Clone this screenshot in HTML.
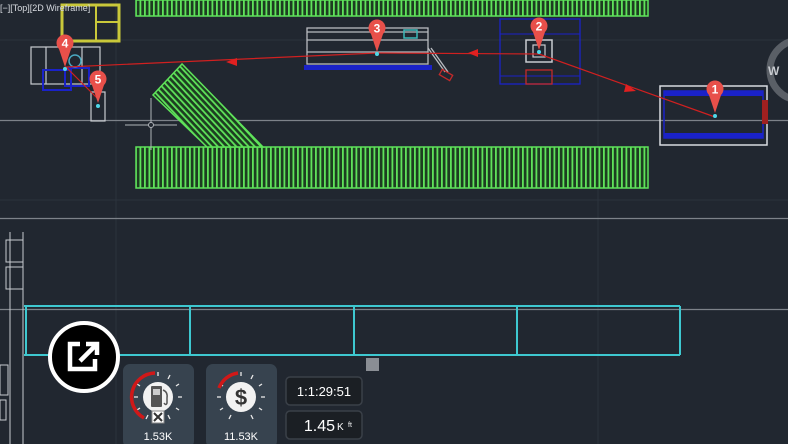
<!DOCTYPE html>
<html><head><meta charset="utf-8"><style>
html,body{margin:0;padding:0;background:#212730;width:788px;height:444px;overflow:hidden;font-family:"Liberation Sans",sans-serif}
.abs{position:absolute}
</style></head><body>
<svg class="abs" style="left:0;top:0" width="788" height="444" viewBox="0 0 788 444">
<defs>
<pattern id="gs" width="4.5" height="10" patternUnits="userSpaceOnUse"><rect width="4.5" height="10" fill="#1d3d21"/><rect width="1.8" height="10" fill="#5fe35a"/></pattern>
<pattern id="gd" width="4.5" height="10" patternUnits="userSpaceOnUse" patternTransform="rotate(-43)"><rect width="4.5" height="10" fill="#1d3d21"/><rect width="1.8" height="10" fill="#5fe35a"/></pattern>
</defs>
<rect width="788" height="444" fill="#212730"/>
<g stroke="#2c333d" stroke-width="1">
<line x1="116" y1="0" x2="116" y2="444"/><line x1="598" y1="0" x2="598" y2="444"/>
<line x1="0" y1="40" x2="788" y2="40"/><line x1="0" y1="200" x2="788" y2="200"/>
</g>
<g stroke="#7d8289" stroke-width="1.3">
<line x1="0" y1="120.5" x2="788" y2="120.5"/>
<line x1="0" y1="218.5" x2="788" y2="218.5"/>
<line x1="0" y1="309.5" x2="788" y2="309.5"/>
</g>
<rect x="136" y="0" width="512" height="16" fill="url(#gs)" stroke="#5fe35a" stroke-width="1.5"/>
<rect x="136" y="147" width="512" height="41" fill="url(#gs)" stroke="#5fe35a" stroke-width="1.5"/>
<polygon points="182,64 153,95 207,147 263,147" fill="url(#gd)" stroke="#5fe35a" stroke-width="1.5"/>
<rect x="62" y="5" width="57" height="36" fill="none" stroke="#c9c83a" stroke-width="3"/>
<line x1="96" y1="5" x2="96" y2="41" stroke="#c9c83a" stroke-width="2"/>
<line x1="96" y1="22" x2="119" y2="22" stroke="#c9c83a" stroke-width="2"/>
<text x="0" y="11" fill="#d8dbe0" font-size="9">[−][Top][2D Wireframe]</text>
<g fill="none" stroke="#c8cbd0" stroke-width="1.2">
<rect x="31" y="47" width="69" height="37"/><line x1="46" y1="47" x2="46" y2="84"/><line x1="82" y1="47" x2="82" y2="84"/>
<rect x="91" y="92" width="14" height="29"/>
</g>
<rect x="43" y="70" width="28" height="20" fill="none" stroke="#1a22c8" stroke-width="2"/>
<rect x="65" y="68" width="24" height="18" fill="none" stroke="#1a22c8" stroke-width="2"/>
<circle cx="75" cy="61" r="6" fill="none" stroke="#4aa8c0" stroke-width="1.5"/>
<g stroke="#b0b4b9" stroke-width="1"><line x1="125" y1="125" x2="177" y2="125"/><line x1="151" y1="98" x2="151" y2="150"/></g>
<circle cx="151" cy="125" r="2.5" fill="#212730" stroke="#b0b4b9"/>
<g fill="none" stroke="#b8bbc0" stroke-width="1.3">
<rect x="307" y="28" width="121" height="36"/><line x1="307" y1="32" x2="428" y2="32"/><line x1="307" y1="40" x2="428" y2="40"/><line x1="307" y1="52" x2="428" y2="52"/>
<line x1="428" y1="48" x2="445" y2="72"/><line x1="431" y1="48" x2="448" y2="72"/>
</g>
<rect x="404" y="30" width="13" height="8" fill="none" stroke="#3bb8b8" stroke-width="1.5"/>
<rect x="304" y="65" width="128" height="5" fill="#1a22c8"/>
<rect x="440" y="72" width="12" height="6" transform="rotate(30 446 75)" fill="none" stroke="#c42a2a" stroke-width="1.3"/>
<rect x="500" y="19" width="80" height="65" fill="none" stroke="#1a22c8" stroke-width="1.3"/>
<line x1="500" y1="34" x2="580" y2="34" stroke="#1a22c8"/><line x1="500" y1="76" x2="580" y2="76" stroke="#1a22c8"/>
<rect x="526" y="40" width="26" height="22" fill="none" stroke="#c8cbd0" stroke-width="1.5"/>
<rect x="533" y="45" width="12" height="12" fill="none" stroke="#c8cbd0" stroke-width="1.2"/>
<rect x="526" y="70" width="26" height="14" fill="none" stroke="#c42a2a" stroke-width="1.3"/>
<rect x="660" y="86" width="107" height="59" fill="none" stroke="#d8dbe0" stroke-width="1.5"/>
<rect x="664" y="91" width="99" height="47" fill="none" stroke="#1a22c8" stroke-width="1.5"/>
<rect x="664" y="91" width="99" height="5" fill="#1a22c8"/><rect x="664" y="133" width="99" height="5" fill="#1a22c8"/>
<rect x="762" y="100" width="6" height="24" fill="#a02020"/>
<circle cx="800" cy="70" r="30" fill="none" stroke="#5a5f66" stroke-width="7"/>
<text x="768" y="75" fill="#c8cbd0" font-size="12" font-weight="bold">W</text>
<g stroke="#d02020" stroke-width="1.2" fill="none">
<polyline points="715,117 539,54 377,53 66,67 98,99"/>
</g>
<g fill="#e02020"><polygon points="226,62 237,58 237,66"/><polygon points="468,53 478,49 478,57"/><polygon points="636,91 626,84 624,92"/></g>
<g font-size="12" font-weight="bold" fill="#fff" text-anchor="middle">
<g transform="translate(715,89)"><polygon points="-6,6 6,6 0,24" fill="#e8504a"/><circle r="8.5" fill="#e8504a"/><text y="4.5">1</text></g>
<g transform="translate(539,26)"><polygon points="-6,6 6,6 0,24" fill="#e8504a"/><circle r="8.5" fill="#e8504a"/><text y="4.5">2</text></g>
<g transform="translate(377,28)"><polygon points="-6,6 6,6 0,24" fill="#e8504a"/><circle r="8.5" fill="#e8504a"/><text y="4.5">3</text></g>
<g transform="translate(65,43)"><polygon points="-6,6 6,6 0,24" fill="#e8504a"/><circle r="8.5" fill="#e8504a"/><text y="4.5">4</text></g>
<g transform="translate(98,79)"><polygon points="-6,6 6,6 0,24" fill="#e8504a"/><circle r="8.5" fill="#e8504a"/><text y="4.5">5</text></g>
</g>
<g fill="#4fd8e8"><circle cx="715" cy="116" r="2"/><circle cx="539" cy="52" r="2"/><circle cx="377" cy="54" r="2"/><circle cx="65" cy="69" r="2"/><circle cx="98" cy="106" r="2"/></g>
<g fill="none" stroke="#c8cbd0" stroke-width="1"><line x1="10" y1="232" x2="10" y2="444"/><line x1="23" y1="232" x2="23" y2="444"/><rect x="6" y="240" width="17" height="22"/><rect x="6" y="267" width="17" height="22"/><rect x="0" y="365" width="8" height="30"/><rect x="0" y="400" width="6" height="20"/></g>
<g stroke="#3ec8d0" stroke-width="2" fill="none">
<line x1="24" y1="306" x2="680" y2="306"/><line x1="24" y1="355" x2="680" y2="355"/>
<line x1="26" y1="306" x2="26" y2="355"/><line x1="190" y1="306" x2="190" y2="355"/><line x1="354" y1="306" x2="354" y2="355"/><line x1="517" y1="306" x2="517" y2="355"/><line x1="680" y1="306" x2="680" y2="355"/>
</g>
<rect x="366" y="358" width="13" height="13" fill="#8a8e94"/>
<circle cx="84" cy="357" r="34" fill="#000" stroke="#fff" stroke-width="4"/>
<path d="M80 344 H70 V369 H95 V359" fill="none" stroke="#fff" stroke-width="4.5"/>
<path d="M80 361 L96 345 M86 344 H97 V355" fill="none" stroke="#fff" stroke-width="4.5"/>
<rect x="123" y="364" width="71" height="84" rx="7" fill="#37434f"/>
<rect x="206" y="364" width="71" height="84" rx="7" fill="#37434f"/>
<g stroke="#e8e8e8" stroke-width="1.3">
<g transform="translate(158,397)"><line x1="0" y1="-25" x2="0" y2="-21"/><line x1="12" y1="-22" x2="10" y2="-18"/><line x1="21" y1="-13" x2="18" y2="-11"/><line x1="24" y1="0" x2="20" y2="0"/><line x1="21" y1="13" x2="18" y2="11"/><line x1="12" y1="22" x2="10" y2="18"/><line x1="-12" y1="22" x2="-10" y2="18"/><line x1="-21" y1="13" x2="-18" y2="11"/><line x1="-24" y1="0" x2="-20" y2="0"/><line x1="-21" y1="-13" x2="-18" y2="-11"/></g>
<g transform="translate(241,397)"><line x1="0" y1="-25" x2="0" y2="-21"/><line x1="12" y1="-22" x2="10" y2="-18"/><line x1="21" y1="-13" x2="18" y2="-11"/><line x1="24" y1="0" x2="20" y2="0"/><line x1="21" y1="13" x2="18" y2="11"/><line x1="12" y1="22" x2="10" y2="18"/><line x1="-12" y1="22" x2="-10" y2="18"/><line x1="-21" y1="13" x2="-18" y2="11"/><line x1="-24" y1="0" x2="-20" y2="0"/><line x1="-21" y1="-13" x2="-18" y2="-11"/></g>
</g>
<path d="M155 373 A24 24 0 0 0 144 418" fill="none" stroke="#d01818" stroke-width="3.5"/>
<path d="M238 373 A24 24 0 0 0 219 388" fill="none" stroke="#d01818" stroke-width="3.5"/>
<circle cx="158" cy="397" r="15" fill="#f2f2f2"/>
<rect x="151" y="386" width="11" height="21" rx="1" fill="#555"/><rect x="153" y="389" width="7" height="6" fill="#ccc"/>
<path d="M163 390 q5 2 4 8 v5 q-1 3 -3 0" fill="none" stroke="#555" stroke-width="1.5"/>
<circle cx="241" cy="397" r="15" fill="#f2f2f2"/>
<text x="241" y="405" text-anchor="middle" font-size="22" font-weight="bold" fill="#333">$</text>
<rect x="152" y="411" width="12" height="12" fill="#fff" stroke="#888"/>
<path d="M154 413 L162 421 M162 413 L154 421" stroke="#333" stroke-width="2"/>
<text x="158" y="440" text-anchor="middle" font-size="11" fill="#fff">1.53K</text>
<text x="241" y="440" text-anchor="middle" font-size="11" fill="#fff">11.53K</text>
<rect x="286" y="377" width="76" height="28" rx="4" fill="#1b1f24" stroke="#3a4048" stroke-width="1.5"/>
<rect x="286" y="411" width="76" height="28" rx="4" fill="#1b1f24" stroke="#3a4048" stroke-width="1.5"/>
<text x="324" y="396" text-anchor="middle" font-size="13" fill="#fff">1:1:29:51</text>
<text x="335" y="431" text-anchor="end" font-size="16" fill="#fff">1.45</text>
<text x="337" y="430" font-size="10" fill="#fff">K</text>
<text x="348" y="427" font-size="7" fill="#fff">ft</text>
</svg>
</body></html>
